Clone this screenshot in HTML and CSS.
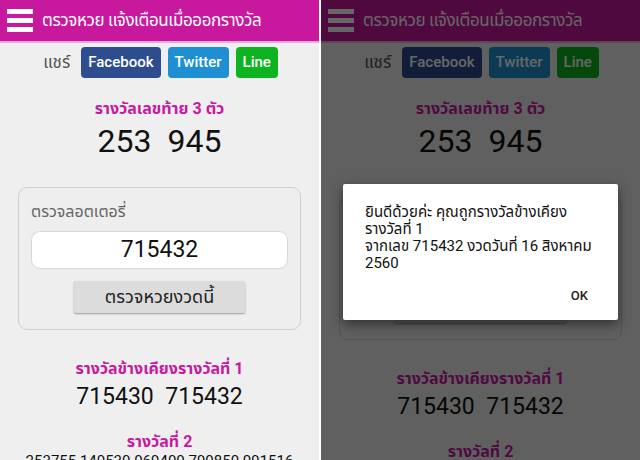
FILE: index.html
```html
<!DOCTYPE html>
<html lang="th">
<head>
    <meta charset="UTF-8">
    <meta name="viewport" content="width=device-width, initial-scale=1">
    <title>ตรวจหวย แจ้งเตือนเมื่อออกรางวัล</title>
    <link rel="stylesheet" href="styles.css">
</head>
<body>
    <div class="screens">

        <!-- Screen 1: normal -->
        <div class="phone">
            <div class="app-bar">
                <span class="menu-icon"><i></i><i></i><i></i></span>
                <span class="app-title">ตรวจหวย แจ้งเตือนเมื่อออกรางวัล</span>
            </div>
            <div class="share-row">
                <span class="share-label">แชร์</span>
                <span class="share-btn facebook">Facebook</span>
                <span class="share-btn twitter">Twitter</span>
                <span class="share-btn line">Line</span>
            </div>
            <div class="prize-title">รางวัลเลขท้าย 3 ตัว</div>
            <div class="prize-big">253&nbsp; 945</div>

            <div class="check-box">
                <div class="check-label">ตรวจลอตเตอรี่</div>
                <div class="number-input">715432</div>
                <div class="check-btn">ตรวจหวยงวดนี้</div>
            </div>

            <div class="prize-title near">รางวัลข้างเคียงรางวัลที่ 1</div>
            <div class="prize-mid">715430&nbsp; 715432</div>
            <div class="prize-title second">รางวัลที่ 2</div>
            <div class="prize-small">253755 140530 069400 790850 091516</div>
        </div>

        <!-- Screen 2: with result dialog -->
        <div class="phone dimmed">
            <div class="app-bar">
                <span class="menu-icon"><i></i><i></i><i></i></span>
                <span class="app-title">ตรวจหวย แจ้งเตือนเมื่อออกรางวัล</span>
            </div>
            <div class="share-row">
                <span class="share-label">แชร์</span>
                <span class="share-btn facebook">Facebook</span>
                <span class="share-btn twitter">Twitter</span>
                <span class="share-btn line">Line</span>
            </div>
            <div class="prize-title">รางวัลเลขท้าย 3 ตัว</div>
            <div class="prize-big">253&nbsp; 945</div>

            <div class="check-box">
                <div class="check-label">ตรวจลอตเตอรี่</div>
                <div class="number-input">715432</div>
                <div class="check-btn">ตรวจหวยงวดนี้</div>
            </div>

            <div class="prize-title near">รางวัลข้างเคียงรางวัลที่ 1</div>
            <div class="prize-mid">715430&nbsp; 715432</div>
            <div class="prize-title second">รางวัลที่ 2</div>
            <div class="prize-small">253755 140530 069400 790850 091516</div>

            <div class="overlay"></div>
            <div class="dialog">
                <p>ยินดีด้วยค่ะ คุณถูกรางวัลข้างเคียง<br>รางวัลที่ 1<br>จากเลข 715432 งวดวันที่ 16 สิงหาคม<br>2560</p>
                <div class="dialog-actions"><span class="dialog-ok">OK</span></div>
            </div>
        </div>

    </div>
</body>
</html>
```

FILE: styles.css
```css
body {
    margin: 0;
    padding: 0;
    background-color: #fff;
    font-family: Roboto, "Noto Sans Thai", "Noto Sans", sans-serif;
    color: #111;
}
.screens {
    display: flex;
    gap: 2px;
    width: 640px;
    height: 460px;
    overflow: hidden;
}
.phone {
    position: relative;
    flex: 0 0 319px;
    height: 460px;
    overflow: hidden;
    background-color: #efefef;
    text-align: center;
}
.app-bar {
    display: flex;
    align-items: center;
    height: 41px;
    padding-left: 7px;
    background-color: #c8189e;
    border-bottom: 2px solid #f0a8df;
    text-align: left;
}
.menu-icon {
    display: flex;
    flex-direction: column;
    gap: 4px;
    width: 26px;
}
.menu-icon i {
    display: block;
    height: 5px;
    background-color: #fff;
}
.app-title {
    margin-left: 9px;
    color: #fff;
    font-size: 17px;
    letter-spacing: -0.4px;
    white-space: nowrap;
}
.share-row {
    display: flex;
    justify-content: center;
    align-items: center;
    gap: 7px;
    margin-top: 4px;
    padding-left: 2px;
}
.share-label {
    margin-right: 4px;
    color: #555;
    font-size: 17px;
}
.share-btn {
    height: 31px;
    line-height: 31px;
    padding: 0 7px;
    border-radius: 4px;
    color: #fff;
    font-size: 15px;
    font-weight: 500;
}
.facebook {
    background-color: #2d4d8e;
}
.twitter {
    background-color: #1e8fd2;
}
.line {
    background-color: #0db420;
}
.prize-title {
    margin-top: 21px;
    color: #c61aa0;
    font-size: 16px;
    font-weight: bold;
    line-height: 20px;
}
.prize-big {
    margin-top: 3px;
    font-size: 32px;
    line-height: 38px;
}
.check-box {
    margin: 27px 18px 0;
    padding: 12px 12px 16px;
    border: 1px solid #d0d0d0;
    border-radius: 9px;
    background-color: #eeeeee;
    text-align: left;
}
.dimmed .check-box {
    margin-top: 37px;
}
.check-label {
    color: #666;
    font-size: 16px;
    line-height: 24px;
}
.number-input {
    margin-top: 7px;
    height: 36px;
    line-height: 36px;
    border: 1px solid #d8d8d8;
    border-radius: 9px;
    background-color: #fff;
    font-size: 23px;
    text-align: center;
}
.check-btn {
    width: 171px;
    height: 32px;
    margin: 12px auto 0;
    line-height: 32px;
    background-color: #dcdcdc;
    box-shadow: 0 1px 2px rgba(0, 0, 0, 0.35);
    border-radius: 2px;
    color: #222;
    font-size: 18px;
    text-align: center;
}
.prize-title.near {
    margin-top: 29px;
}
.prize-mid {
    margin-top: 3px;
    font-size: 23px;
    line-height: 30px;
}
.prize-title.second {
    margin-top: 20px;
}
.prize-small {
    font-size: 15px;
    line-height: 18px;
    white-space: nowrap;
}
.overlay {
    position: absolute;
    inset: 0;
    background-color: rgba(0, 0, 0, 0.6);
}
.dialog {
    position: absolute;
    left: 22px;
    top: 184px;
    width: 275px;
    height: 136px;
    box-sizing: border-box;
    padding: 20px 22px 0;
    background-color: #fff;
    box-shadow: 0 4px 12px rgba(0, 0, 0, 0.5);
    border-radius: 2px;
    text-align: left;
}
.dialog p {
    margin: 0;
    font-size: 15px;
    line-height: 17px;
    color: #111;
}
.dialog-actions {
    display: flex;
    justify-content: flex-end;
    margin-top: 16px;
    padding-right: 8px;
}
.dialog-ok {
    font-size: 13px;
    font-weight: 500;
    color: #222;
}
```
